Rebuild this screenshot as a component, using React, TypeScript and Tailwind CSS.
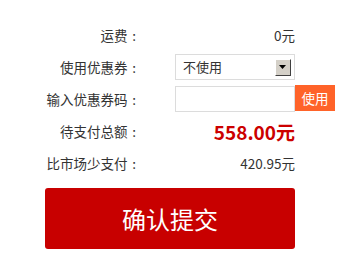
const font = { fontFamily: '"Microsoft YaHei", "Noto Sans CJK SC", sans-serif' };

function Row({ label, children }: { label: string; children: React.ReactNode }) {
  return (
    <div className="flex h-[32px] items-center">
      <div className="w-[141px] text-right text-[13.5px] text-[#333]">
        {label}
        <span className="inline-block w-[1em] text-center">:</span>
      </div>
      <div className="ml-[34px] flex w-[120px] items-center">{children}</div>
    </div>
  );
}

export default function App() {
  return (
    <div className="h-[255px] w-[354px] bg-white pt-[19px]" style={font}>
      <Row label="运费">
        <span className="w-full text-right text-[13.5px] text-[#333]">0元</span>
      </Row>
      <Row label="使用优惠券">
        <div className="flex h-[26px] w-[120px] items-center justify-between border border-[#dcdcdc] bg-white pl-[7px] pr-[3px]">
          <span className="text-[13px] text-[#333]">不使用</span>
          <span className="flex h-[17px] w-[16px] items-center justify-center border border-t-white border-l-white border-r-[#404040] border-b-[#404040] bg-[#d4d0c8]">
            <svg width="8" height="5" viewBox="0 0 8 5">
              <path d="M0 0 H7 L3.5 4 Z" fill="#000" />
            </svg>
          </span>
        </div>
      </Row>
      <Row label="输入优惠券码">
        <div className="relative flex items-center">
          <div className="h-[26px] w-[120px] border border-[#dcdcdc] bg-white" />
          <button
            type="button"
            className="absolute left-[120px] top-[-1px] h-[26px] w-[40px] bg-[#ff6329] text-[13.5px] text-white"
          >
            使用
          </button>
        </div>
      </Row>
      <Row label="待支付总额">
        <span className="w-full text-right text-[19px] font-bold leading-none text-[#cc0000]">558.00元</span>
      </Row>
      <Row label="比市场少支付">
        <span className="w-full text-right text-[13.5px] text-[#333]">420.95元</span>
      </Row>
      <div className="mt-[9px] pl-[45px]">
        <button
          type="button"
          className="h-[61px] w-[250px] rounded-[3px] bg-[#c80000] text-[24px] text-white"
        >
          确认提交
        </button>
      </div>
    </div>
  );
}
